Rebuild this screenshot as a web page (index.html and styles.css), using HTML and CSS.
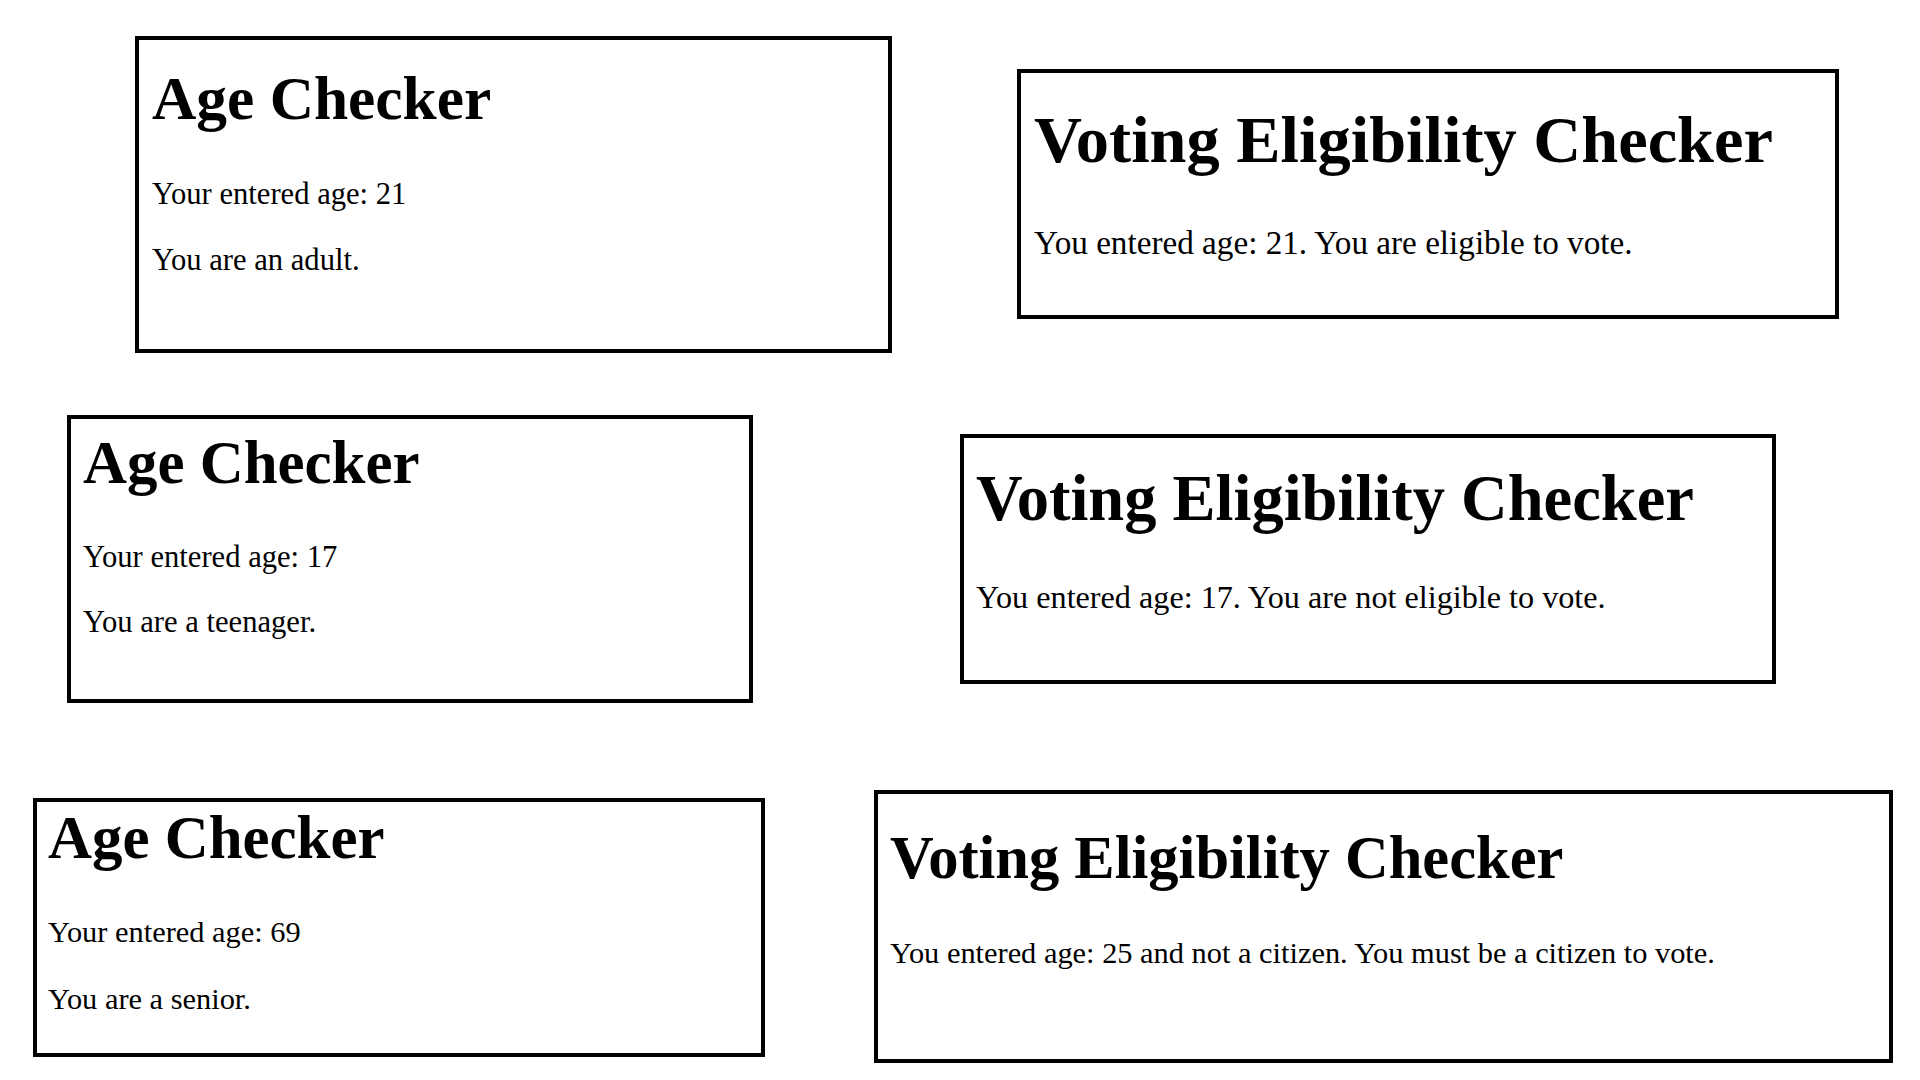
FILE: index.html
```html
<!DOCTYPE html>
<html lang="en">
<head>
<meta charset="utf-8">
<title>Age &amp; Voting Checkers</title>
<link rel="stylesheet" href="styles.css">
</head>
<body>
  <div class="row row-1">
    <section class="card card-age1">
      <h1>Age Checker</h1>
      <p class="p-first">Your entered age: 21</p>
      <p class="p-second">You are an adult.</p>
    </section>
    <section class="card card-vote1">
      <h1>Voting Eligibility Checker</h1>
      <p class="p-first">You entered age: 21. You are eligible to vote.</p>
    </section>
  </div>
  <div class="row row-2">
    <section class="card card-age2">
      <h1>Age Checker</h1>
      <p class="p-first">Your entered age: 17</p>
      <p class="p-second">You are a teenager.</p>
    </section>
    <section class="card card-vote2">
      <h1>Voting Eligibility Checker</h1>
      <p class="p-first">You entered age: 17. You are not eligible to vote.</p>
    </section>
  </div>
  <div class="row row-3">
    <section class="card card-age3">
      <h1>Age Checker</h1>
      <p class="p-first">Your entered age: 69</p>
      <p class="p-second">You are a senior.</p>
    </section>
    <section class="card card-vote3">
      <h1>Voting Eligibility Checker</h1>
      <p class="p-first">You entered age: 25 and not a citizen. You must be a citizen to vote.</p>
    </section>
  </div>
</body>
</html>
```
FILE: styles.css
```css
html, body {
  margin: 0;
  padding: 0;
  background: #fff;
}

body {
  width: 1920px;
  height: 1080px;
  overflow: hidden;
  font-family: "Liberation Serif", "Times New Roman", serif;
  color: #000;
}

.row {
  display: flex;
  align-items: flex-start;
}

.row-1 { padding-top: 36px; height: 317px; }
.row-2 { margin-top: 62px; height: 288px; }
.row-3 { margin-top: 87px; }

.card {
  box-sizing: border-box;
  border: 4px solid #000;
  flex: none;
}

.card h1 {
  font-weight: bold;
  line-height: 1.2;
  margin: 0;
  white-space: nowrap;
}

.card p {
  line-height: 1.2;
  margin: 0;
  white-space: nowrap;
}

/* Row 1 */
.card-age1 {
  margin-left: 135px;
  width: 757px;
  height: 317px;
  padding: 0 13px;
}
.card-age1 h1 { font-size: 61.4px; margin-top: 22px; }
.card-age1 p { font-size: 30.6px; }
.card-age1 .p-first { margin-top: 40px; }
.card-age1 .p-second { margin-top: 30px; }

.card-vote1 {
  margin-left: 125px;
  margin-top: 33px;
  width: 822px;
  height: 250px;
  padding: 0 13px;
}
.card-vote1 h1 { font-size: 66.4px; margin-top: 27px; }
.card-vote1 p { font-size: 33.2px; }
.card-vote1 .p-first { margin-top: 43px; }

/* Row 2 */
.card-age2 {
  margin-left: 67px;
  width: 686px;
  height: 288px;
  padding: 0 12px;
}
.card-age2 h1 { font-size: 60.9px; margin-top: 7px; }
.card-age2 p { font-size: 30.6px; }
.card-age2 .p-first { margin-top: 40px; }
.card-age2 .p-second { margin-top: 28px; }

.card-vote2 {
  margin-left: 207px;
  margin-top: 19px;
  width: 816px;
  height: 250px;
  padding: 0 12px;
}
.card-vote2 h1 { font-size: 64.5px; margin-top: 22px; }
.card-vote2 p { font-size: 32.2px; }
.card-vote2 .p-first { margin-top: 41px; }

/* Row 3 */
.card-age3 {
  margin-left: 33px;
  margin-top: 8px;
  width: 732px;
  height: 259px;
  padding: 0 11px;
}
.card-age3 h1 { font-size: 60.9px; margin-top: -1px; }
.card-age3 p { font-size: 30.4px; }
.card-age3 .p-first { margin-top: 40px; }
.card-age3 .p-second { margin-top: 30px; }

.card-vote3 {
  margin-left: 109px;
  width: 1019px;
  height: 273px;
  padding: 0 12px;
}
.card-vote3 h1 { font-size: 60.5px; margin-top: 28px; }
.card-vote3 p { font-size: 30.4px; }
.card-vote3 .p-first { margin-top: 40px; }
```
